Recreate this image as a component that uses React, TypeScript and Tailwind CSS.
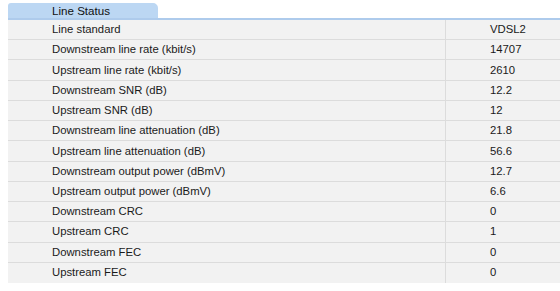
import React from "react";

const rows: [string, string][] = [
  ["Line standard", "VDSL2"],
  ["Downstream line rate (kbit/s)", "14707"],
  ["Upstream line rate (kbit/s)", "2610"],
  ["Downstream SNR (dB)", "12.2"],
  ["Upstream SNR (dB)", "12"],
  ["Downstream line attenuation (dB)", "21.8"],
  ["Upstream line attenuation (dB)", "56.6"],
  ["Downstream output power (dBmV)", "12.7"],
  ["Upstream output power (dBmV)", "6.6"],
  ["Downstream CRC", "0"],
  ["Upstream CRC", "1"],
  ["Downstream FEC", "0"],
  ["Upstream FEC", "0"],
];

export default function App() {
  return (
    <div
      className="w-[560px] h-[291px] bg-white pl-[8px] pt-[3px] text-[11.3px] text-[#1a1a1a] overflow-hidden"
      style={{ fontFamily: '"Liberation Sans", Arial, sans-serif' }}
    >
      <div className="flex">
        <div className="w-[150px] h-[15px] bg-[#bcd7f3] rounded-tl-[3px] rounded-tr-[5px] pl-[44px] leading-[15px] text-[11.6px] text-[#111]">
          Line Status
        </div>
      </div>
      <div className="h-[2px] bg-[#aecbec]" />
      <div className="grid grid-rows-[repeat(13,1fr)] h-[263px] bg-[#f2f2f2]">
        {rows.map(([label, value], i) => (
          <div
            key={label}
            className={`flex ${i < rows.length - 1 ? "border-b border-[#dcdcdc]" : ""}`}
          >
            <div className="w-[438px] flex items-center pl-[44px] border-r border-[#dcdcdc]">
              {label}
            </div>
            <div className="flex-1 flex items-center pl-[44px]">{value}</div>
          </div>
        ))}
      </div>
    </div>
  );
}
